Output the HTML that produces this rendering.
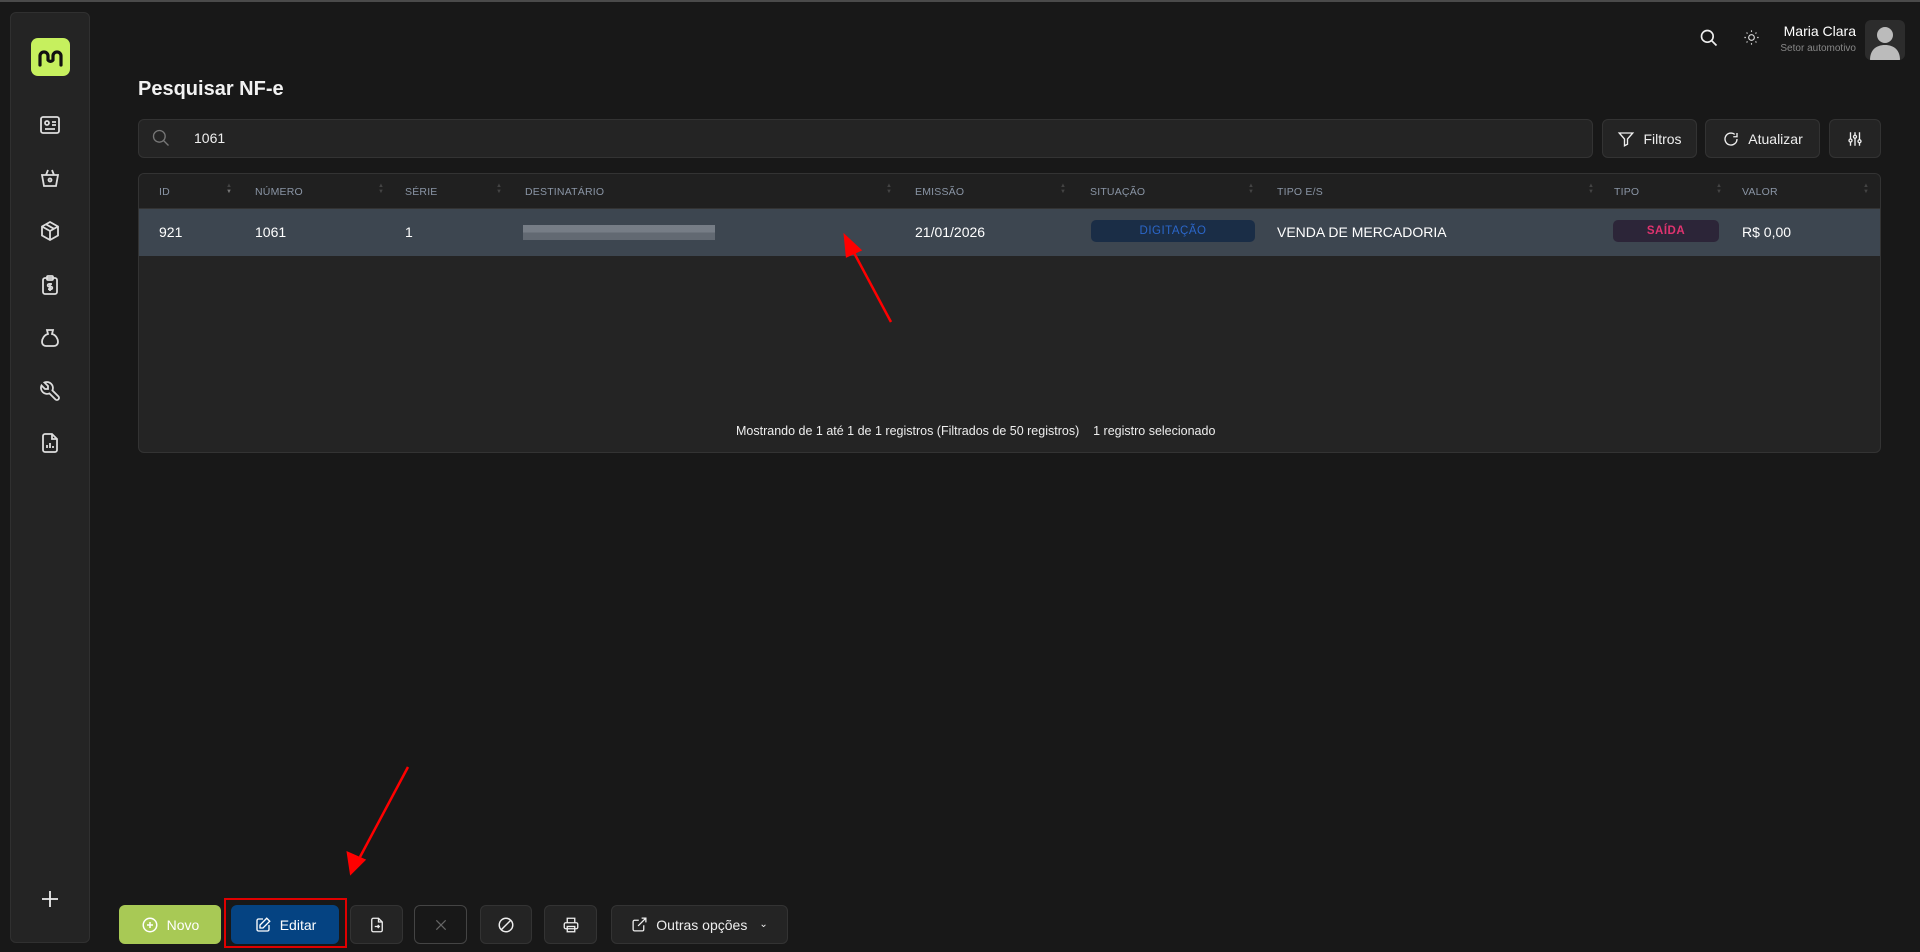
<!DOCTYPE html>
<html><head><meta charset="utf-8"><style>
*{box-sizing:border-box;margin:0;padding:0}
body{width:1920px;height:952px;background:#181818;font-family:"Liberation Sans",sans-serif;color:#eee;position:relative;overflow:hidden}
.abs{position:absolute}
.side{left:10px;top:12px;width:80px;height:931px;background:#242424;border:1px solid #303030;border-radius:6px}
.ic{position:absolute;left:38px;width:24px;height:24px}
.btn{position:absolute;background:#242424;border:1px solid #333;border-radius:6px;display:flex;align-items:center;justify-content:center;gap:8px;font-size:14px;color:#eee}
.th{position:absolute;top:186px;font-size:10.5px;color:#8a95a5;letter-spacing:.2px}
.sa{position:absolute;top:183px;width:6px;font-size:6px;color:#444;line-height:6px}
.td{position:absolute;top:224px;font-size:14px;color:#fff}
svg{display:block}
</style></head><body>
<div class="abs" style="left:0;top:0;width:1920px;height:2px;background:#4a4a4a"></div>
<div class="abs side"></div>
<div class="abs" style="left:31px;top:38px;width:39px;height:38px;background:#c6f05e;border-radius:7px">
<svg width="39" height="38" viewBox="0 0 39 38"><path d="M9 27V18a4 4 0 0 1 8 0v4a3 3 0 0 0 5 0v-4a4 4 0 0 1 8 0v9" fill="none" stroke="#111" stroke-width="3.2" stroke-linecap="round"/></svg></div>
<svg class="ic" style="top:113px" viewBox="0 0 24 24" fill="none" stroke="#ddd" stroke-width="1.8"><rect x="3" y="4" width="18" height="16" rx="2"/><circle cx="9" cy="10" r="2"/><path d="M14 9h4M14 12h4M7 16h10"/></svg>
<svg class="ic" style="top:166px" viewBox="0 0 24 24" fill="none" stroke="#ddd" stroke-width="1.8"><path d="M4 9h16l-2 11H6z"/><path d="M8 9l2-5M16 9l-2-5"/><circle cx="12" cy="14" r="1.5"/></svg>
<svg class="ic" style="top:219px" viewBox="0 0 24 24" fill="none" stroke="#ddd" stroke-width="1.8"><path d="M12 3l8 4.5v9L12 21l-8-4.5v-9z"/><path d="M12 12l8-4.5M12 12v9M12 12L4 7.5M8 5.3l8 4.5"/></svg>
<svg class="ic" style="top:273px" viewBox="0 0 24 24" fill="none" stroke="#ddd" stroke-width="1.8"><rect x="5" y="5" width="14" height="16" rx="2"/><rect x="9" y="3" width="6" height="4" rx="1"/><path d="M14 11h-3a1.3 1.3 0 0 0 0 2.6h2a1.3 1.3 0 0 1 0 2.6h-3M12 10v8"/></svg>
<svg class="ic" style="top:326px" viewBox="0 0 24 24" fill="none" stroke="#ddd" stroke-width="1.8"><path d="M9 4h6l-1 4c4 1 6 5 6 8a4 4 0 0 1-4 4H8a4 4 0 0 1-4-4c0-3 2-7 6-8z"/></svg>
<svg class="ic" style="top:379px" viewBox="0 0 24 24" fill="none" stroke="#ddd" stroke-width="1.8"><path d="M7 10h3V7L6.5 3.5a6 6 0 0 1 7.9 7.9l6 6a2 2 0 0 1-3 3l-6-6a6 6 0 0 1-7.9-7.9z"/></svg>
<svg class="ic" style="top:431px" viewBox="0 0 24 24" fill="none" stroke="#ddd" stroke-width="1.8"><path d="M14 3H7a2 2 0 0 0-2 2v14a2 2 0 0 0 2 2h10a2 2 0 0 0 2-2V8z"/><path d="M14 3v5h5M9 17v-3M12 17v-5M15 17v-2"/></svg>
<svg class="ic" style="top:887px" viewBox="0 0 24 24" fill="none" stroke="#eee" stroke-width="1.8"><path d="M12 4v16M4 12h16"/></svg>

<svg class="abs" style="left:1699px;top:28px" width="20" height="20" viewBox="0 0 24 24" fill="none" stroke="#eee" stroke-width="2"><circle cx="10" cy="10" r="7"/><path d="M15 15l6 6"/></svg>
<svg class="abs" style="left:1743px;top:29px" width="17" height="17" viewBox="0 0 24 24" fill="none" stroke="#ddd" stroke-width="1.6"><circle cx="12" cy="12" r="4"/><path d="M12 2v2M12 20v2M2 12h2M20 12h2M5 5l1.4 1.4M17.6 17.6L19 19M5 19l1.4-1.4M17.6 6.4L19 5"/></svg>
<div class="abs" style="right:64px;top:23px;font-size:14px;color:#fff;text-align:right">Maria Clara</div>
<div class="abs" style="right:64px;top:43px;font-size:10px;color:#888;text-align:right">Setor automotivo</div>
<div class="abs" style="left:1865px;top:20px;width:40px;height:40px;background:#2c2c2c;border-radius:6px;overflow:hidden">
<svg width="40" height="40" viewBox="0 0 40 40"><circle cx="20" cy="15" r="8" fill="#bbb"/><path d="M5 40c0-10 6-15 15-15s15 5 15 15z" fill="#bbb"/></svg></div>

<div class="abs" style="left:138px;top:78px;font-size:20px;font-weight:bold;color:#f2f2f2">Pesquisar NF-e</div>
<div class="abs" style="left:138px;top:119px;width:1455px;height:39px;background:#242424;border:1px solid #333;border-radius:6px"></div>
<svg class="abs" style="left:151px;top:128px" width="20" height="20" viewBox="0 0 24 24" fill="none" stroke="#777" stroke-width="1.6"><circle cx="10" cy="10" r="7"/><path d="M15 15l6 6"/></svg>
<div class="abs" style="left:194px;top:130px;font-size:14px;color:#eee">1061</div>
<div class="btn" style="left:1602px;top:119px;width:95px;height:39px"><svg width="18" height="18" viewBox="0 0 24 24" fill="none" stroke="#eee" stroke-width="1.8"><path d="M3 4h18l-7 8v7l-4 2v-9z"/></svg>Filtros</div>
<div class="btn" style="left:1705px;top:119px;width:115px;height:39px"><svg width="18" height="18" viewBox="0 0 24 24" fill="none" stroke="#eee" stroke-width="1.8"><path d="M20 12a8 8 0 1 1-3-6.2M20 4v5h-5"/></svg>Atualizar</div>
<div class="btn" style="left:1829px;top:119px;width:52px;height:39px"><svg width="18" height="18" viewBox="0 0 24 24" fill="none" stroke="#eee" stroke-width="1.8"><path d="M6 3v18M12 3v18M18 3v18"/><circle cx="6" cy="14" r="2" fill="#242424"/><circle cx="12" cy="9" r="2" fill="#242424"/><circle cx="18" cy="15" r="2" fill="#242424"/></svg></div>

<div class="abs" style="left:138px;top:173px;width:1743px;height:280px;background:#242424;border:1px solid #333;border-radius:6px;overflow:hidden">
<div style="height:35px;background:#202020;border-bottom:1px solid #333"></div>
<div style="height:47px;background:#3d4650"></div>
</div>
<div class="th" style="left:159px">ID</div><div class="th" style="left:255px">NÚMERO</div><div class="th" style="left:405px">SÉRIE</div><div class="th" style="left:525px">DESTINATÁRIO</div><div class="th" style="left:915px">EMISSÃO</div><div class="th" style="left:1090px">SITUAÇÃO</div><div class="th" style="left:1277px">TIPO E/S</div><div class="th" style="left:1614px">TIPO</div><div class="th" style="left:1742px">VALOR</div>
<div class="sa" style="left:226px">▲<br><span style="color:#777">▼</span></div>
<div class="sa" style="left:378px">▲<br>▼</div><div class="sa" style="left:496px">▲<br>▼</div><div class="sa" style="left:886px">▲<br>▼</div><div class="sa" style="left:1060px">▲<br>▼</div><div class="sa" style="left:1248px">▲<br>▼</div><div class="sa" style="left:1588px">▲<br>▼</div><div class="sa" style="left:1716px">▲<br>▼</div><div class="sa" style="left:1863px">▲<br>▼</div>
<div class="td" style="left:159px">921</div><div class="td" style="left:255px">1061</div><div class="td" style="left:405px">1</div>
<div class="abs" style="left:523px;top:225px;width:192px;height:15px;background:linear-gradient(180deg,#858b93 0 50%,#6b727b 50%);opacity:.8"></div>
<div class="td" style="left:915px">21/01/2026</div>
<div class="abs" style="left:1091px;top:220px;width:164px;height:22px;background:#1a2d46;border-radius:5px;color:#2b66c8;font-size:11.5px;text-align:center;line-height:22px;letter-spacing:.5px">DIGITAÇÃO</div>
<div class="td" style="left:1277px">VENDA DE MERCADORIA</div>
<div class="abs" style="left:1613px;top:220px;width:106px;height:22px;background:#2c2538;border-radius:5px;color:#e0336f;font-size:11.5px;font-weight:bold;text-align:center;line-height:22px;letter-spacing:.5px">SAÍDA</div>
<div class="td" style="left:1742px">R$ 0,00</div>
<div class="abs" style="left:736px;top:424px;font-size:12.5px;color:#eee">Mostrando de 1 até 1 de 1 registros (Filtrados de 50 registros)&nbsp;&nbsp;&nbsp;&nbsp;1 registro selecionado</div>

<div class="btn" style="left:119px;top:905px;width:102px;height:39px;background:#a8c955;border:none;color:#fff"><svg width="18" height="18" viewBox="0 0 24 24" fill="none" stroke="#fff" stroke-width="2"><circle cx="12" cy="12" r="9"/><path d="M12 8v8M8 12h8"/></svg>Novo</div>
<div class="abs" style="left:224px;top:898px;width:123px;height:50px;border:2px solid #e00000"></div>
<div class="btn" style="left:231px;top:905px;width:108px;height:39px;background:#054382;border:none;color:#fff"><svg width="18" height="18" viewBox="0 0 24 24" fill="none" stroke="#fff" stroke-width="1.8"><path d="M12 4H6a2 2 0 0 0-2 2v12a2 2 0 0 0 2 2h12a2 2 0 0 0 2-2v-6"/><path d="M17 3l4 4-9 9H8v-4z"/></svg>Editar</div>
<div class="btn" style="left:350px;top:905px;width:53px;height:39px"><svg width="18" height="18" viewBox="0 0 24 24" fill="none" stroke="#eee" stroke-width="1.8"><path d="M14 3H7a2 2 0 0 0-2 2v14a2 2 0 0 0 2 2h10a2 2 0 0 0 2-2V8z"/><path d="M14 3v5h5M9 14h6M13 12l2 2-2 2"/></svg></div>
<div class="btn" style="left:414px;top:905px;width:53px;height:39px;background:#181818;border-color:#444"><svg width="16" height="16" viewBox="0 0 24 24" fill="none" stroke="#666" stroke-width="1.8"><path d="M5 5l14 14M19 5L5 19"/></svg></div>
<div class="btn" style="left:480px;top:905px;width:52px;height:39px"><svg width="18" height="18" viewBox="0 0 24 24" fill="none" stroke="#eee" stroke-width="2"><circle cx="12" cy="12" r="9"/><path d="M6 18L18 6"/></svg></div>
<div class="btn" style="left:544px;top:905px;width:53px;height:39px"><svg width="18" height="18" viewBox="0 0 24 24" fill="none" stroke="#eee" stroke-width="1.8"><path d="M7 9V3h10v6"/><rect x="3" y="9" width="18" height="8" rx="2"/><rect x="7" y="14" width="10" height="7"/></svg></div>
<div class="btn" style="left:611px;top:905px;width:177px;height:39px"><svg width="17" height="17" viewBox="0 0 24 24" fill="none" stroke="#eee" stroke-width="1.8"><path d="M18 13v6a2 2 0 0 1-2 2H5a2 2 0 0 1-2-2V8a2 2 0 0 1 2-2h6M15 3h6v6M10 14L21 3"/></svg>Outras opções <span style="font-size:10px;margin-left:4px">⌄</span></div>

<svg class="abs" style="left:0;top:0" width="1920" height="952"><g stroke="#f00" stroke-width="2.5" fill="#f00"><line x1="891" y1="322" x2="852" y2="249"/><polygon points="845,236 860,250 847,256" /><line x1="408" y1="767" x2="360" y2="857"/><polygon points="351,873 348,853 364,860"/></g></svg>
</body></html>
